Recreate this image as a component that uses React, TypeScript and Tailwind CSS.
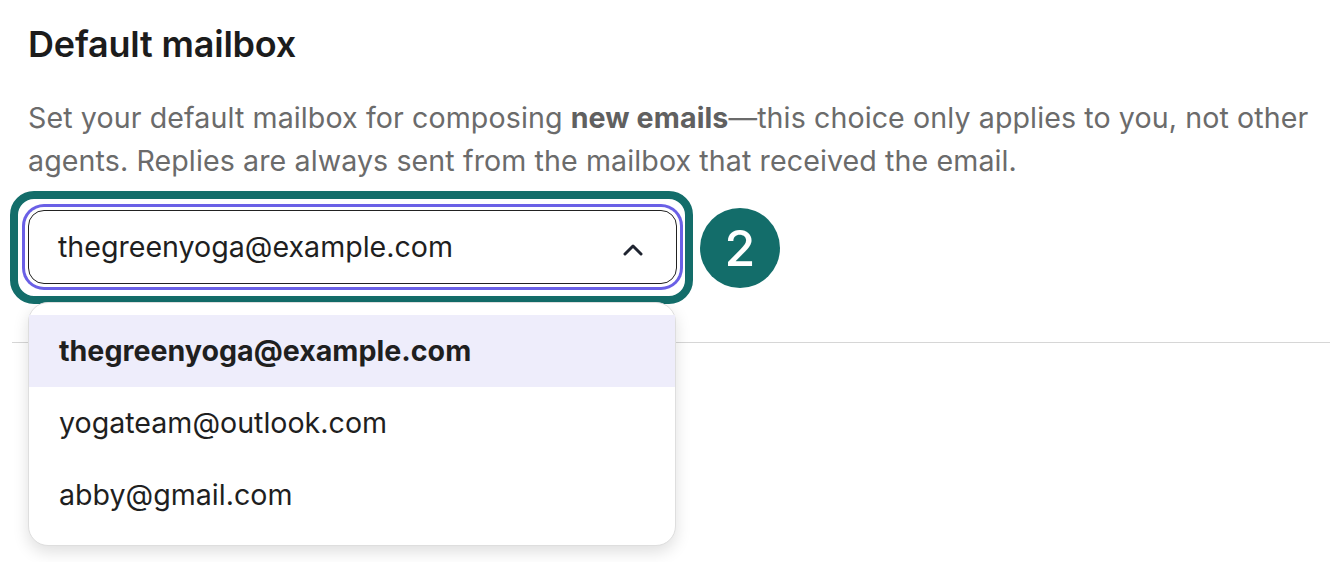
import React from "react";

function ChevronUp() {
  return (
    <svg width="24" height="24" viewBox="0 0 24 24" fill="none" stroke="#1f2430" strokeWidth="3" strokeLinecap="round" strokeLinejoin="round" className="mt-[6px]">
      <path d="M4 16l8-8 8 8" />
    </svg>
  );
}

export default function App() {
  const options = ["thegreenyoga@example.com", "yogateam@outlook.com", "abby@gmail.com"];
  return (
    <div className="relative w-[1330px] h-[562px] overflow-hidden bg-white font-['Inter',sans-serif]">
      <div className="pl-[28px] pt-[22px]">
        <h2 className="text-[36px] leading-[44px] font-semibold text-[#1c1c1c] tracking-[-0.2px]">Default mailbox</h2>
        <p className="mt-[30px] text-[28.6px] leading-[43px] text-[#6b6b6b] w-[1300px] tracking-[0.1px]">
          Set your default mailbox for composing <span className="font-bold text-[#606060]">new emails</span>—this choice only applies to you, not other agents. Replies are always sent from the mailbox that received the email.
        </p>
      </div>
      <div className="relative ml-[10px] mt-[9px] flex items-center gap-[7px]">
        <div className="relative rounded-[24px] border-[8px] border-[#136d6a] pl-[10px] pr-[8px] pt-[11px] pb-[12px]">
          <div className="flex h-[74px] w-[649px] items-center justify-between rounded-[16px] border border-[#222] bg-white pl-[29px] pr-[31px] ring-[3px] ring-[#6a60e6] ring-offset-[3px] ring-offset-white">
            <span className="text-[28.6px] text-[#1f1f1f]">thegreenyoga@example.com</span>
            <ChevronUp />
          </div>
        </div>
        <div className="flex h-[80px] w-[80px] items-center justify-center rounded-full bg-[#136d6a] text-[50px] font-medium leading-none text-white">2</div>
      </div>
      <div className="ml-[12px] mt-[38px] h-px bg-[#d6d6d6]" />
      <div className="absolute left-[28px] top-[302px] w-[648px] rounded-[20px] border border-[#dedede] bg-white pt-[12px] pb-[14px] shadow-[0_6px_16px_rgba(0,0,0,0.13)]">
        {options.map((o, i) => (
          <div key={o} className={`flex h-[72px] items-center pl-[30px] text-[28.6px] text-[#1f1f1f] ${i === 0 ? "bg-[#eeedfb] font-bold" : ""}`}>
            {o}
          </div>
        ))}
      </div>
    </div>
  );
}
